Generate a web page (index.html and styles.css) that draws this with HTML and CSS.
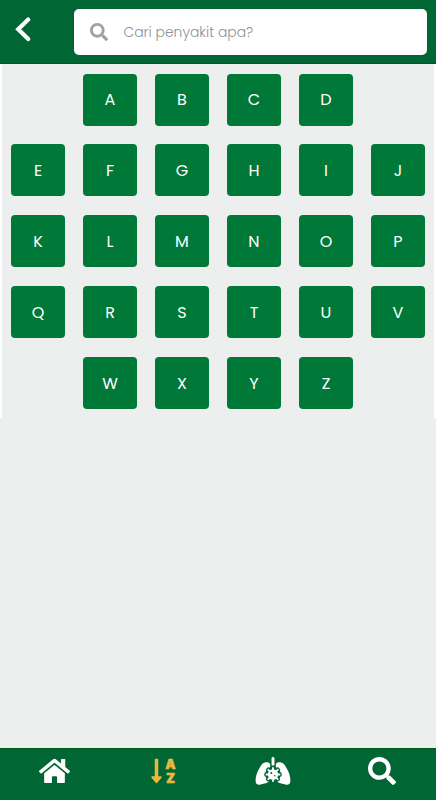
FILE: index.html
```html
<!DOCTYPE html>
<html lang="id">
<head>
<meta charset="utf-8">
<meta name="viewport" content="width=device-width, initial-scale=1">
<title>Cari penyakit</title>
<link rel="stylesheet" href="styles.css">
</head>
<body>
<header class="topbar">
  <a class="back" href="#" aria-label="Kembali">
    <svg width="16" height="26" viewBox="0 0 16 26"><path d="M13.2 2.600 3.2 12.300l10 9.700" fill="none" stroke="currentColor" stroke-width="4.200" stroke-linecap="round" stroke-linejoin="miter"/></svg>
  </a>
  <label class="search">
    <svg class="search-icon" viewBox="0 0 512 512"><path fill="currentColor" d="M505 442.700L405.300 343c-4.500-4.500-10.600-7-17-7H372c27.600-35.300 44-79.700 44-128C416 93.100 322.900 0 208 0S0 93.100 0 208s93.100 208 208 208c48.300 0 92.700-16.400 128-44v16.300c0 6.400 2.500 12.500 7 17l99.700 99.700c9.400 9.400 24.600 9.400 33.900 0l28.300-28.300c9.400-9.400 9.400-24.600.1-34zM208 336c-70.700 0-128-57.200-128-128 0-70.700 57.200-128 128-128 70.700 0 128 57.200 128 128 0 70.700-57.200 128-128 128z"/></svg>
    <span class="placeholder">Cari penyakit apa?</span>
  </label>
</header>
<main class="content">
  <div class="letters">
    <a class="letter indent">A</a><a class="letter">B</a><a class="letter">C</a><a class="letter">D</a>
    <a class="letter first">E</a><a class="letter">F</a><a class="letter">G</a><a class="letter">H</a><a class="letter">I</a><a class="letter">J</a>
    <a class="letter">K</a><a class="letter">L</a><a class="letter">M</a><a class="letter">N</a><a class="letter">O</a><a class="letter">P</a>
    <a class="letter">Q</a><a class="letter">R</a><a class="letter">S</a><a class="letter">T</a><a class="letter">U</a><a class="letter">V</a>
    <a class="letter indent">W</a><a class="letter">X</a><a class="letter">Y</a><a class="letter">Z</a>
  </div>
</main>
<nav class="tabs">
  <a class="tab"><svg class="home" viewBox="0 0 576 512"><path fill="currentColor" d="M280.370 148.260L96 300.110V464a16 16 0 0 0 16 16l112.060-.29a16 16 0 0 0 15.920-16V368a16 16 0 0 1 16-16h64a16 16 0 0 1 16 16v95.640a16 16 0 0 0 16 16.050L464 480a16 16 0 0 0 16-16V300L295.670 148.260a12.190 12.190 0 0 0-15.300 0zM571.600 251.470L488 182.560V44.050a12 12 0 0 0-12-12h-56a12 12 0 0 0-12 12v72.610L318.470 43a48 48 0 0 0-61 0L4.340 251.470a12 12 0 0 0-1.600 16.900l25.500 31A12 12 0 0 0 45.150 301l235.220-193.740a12.190 12.190 0 0 1 15.300 0L530.900 301a12 12 0 0 0 16.900-1.600l25.500-31a12 12 0 0 0-1.700-16.930z"/></svg></a>
  <a class="tab active">
    <svg class="arrow" viewBox="0 0 192 512"><path fill="currentColor" d="M176 352h-48V48a16 16 0 0 0-16-16H80a16 16 0 0 0-16 16v304H16c-14.190 0-21.360 17.240-11.290 27.310l80 96a16 16 0 0 0 22.620 0l80-96C197.350 369.260 190.220 352 176 352z"/></svg>
    <span class="az"><span>A</span><span>Z</span></span>
  </a>
  <a class="tab"><svg class="lungs" viewBox="0 0 36 30">
    <path d="M18 2.500v6" fill="none" stroke="currentColor" stroke-width="2.900" stroke-linecap="round"/>
    <path fill="currentColor" d="M11.800 6.200c2.200 0 3.400 1.200 3.400 3v12.800c0 3-1.700 4.600-4.500 5.300l-5.200 1.300C2.600 29.300.6 28 .6 25c0-4 1-7.300 2.400-10.200l3-5.300c1.500-2.400 3.400-3.300 5.800-3.300zM24.200 6.200c-2.200 0-3.400 1.200-3.400 3v12.800c0 3 1.700 4.600 4.500 5.300l5.200 1.300c2.900.7 4.900-.6 4.900-3.600 0-4-1-7.300-2.400-10.200l-3-5.300c-1.500-2.400-3.400-3.300-5.800-3.300z"/>
    <g class="virus-gap"><circle cx="18" cy="18.500" r="5.500"/><path d="M18 11.900v13.200M11.400 18.500h13.200M13.300 13.800l9.400 9.400M22.700 13.800l-9.400 9.400"/></g>
    <g class="virus"><circle cx="18" cy="18.500" r="5.200"/><path d="M18 11.900v13.200M11.400 18.500h13.200M13.300 13.800l9.400 9.400M22.700 13.800l-9.400 9.400"/></g>
    <circle class="spot" cx="16.300" cy="17" r="1"/><circle class="spot" cx="19.700" cy="19.800" r=".7"/>
  </svg></a>
  <a class="tab"><svg class="find" viewBox="0 0 512 512"><path fill="currentColor" d="M505 442.700L405.300 343c-4.500-4.500-10.600-7-17-7H372c27.600-35.300 44-79.700 44-128C416 93.100 322.900 0 208 0S0 93.100 0 208s93.100 208 208 208c48.300 0 92.700-16.400 128-44v16.300c0 6.400 2.500 12.500 7 17l99.700 99.700c9.400 9.400 24.600 9.400 33.900 0l28.300-28.300c9.400-9.400 9.400-24.600.1-34zM208 336c-70.700 0-128-57.200-128-128 0-70.700 57.200-128 128-128 70.700 0 128 57.200 128 128 0 70.700-57.200 128-128 128z"/></svg></a>
</nav>
</body>
</html>
```
FILE: styles.css
```css
* { box-sizing: border-box; }
body {
  margin: 0;
  height: 800px;
  display: flex;
  flex-direction: column;
  overflow: hidden;
  background: #edefee;
  font-family: Poppins, Inter, sans-serif;
}
svg { display: block; flex: none; }
.topbar {
  flex: none;
  height: 64px;
  padding: 9px 9px 9px 15px;
  display: flex;
  background: #006633;
  border-bottom: 1px solid #005a20;
}
.back { width: 59px; padding-top: 8px; color: #fff; }
.search {
  flex: 1;
  height: 46px;
  display: flex;
  align-items: center;
  padding-left: 16px;
  border-radius: 5px;
  background: #fff;
}
.search-icon { width: 18px; height: 18px; color: #9ca3a8; }
.placeholder {
  margin-left: 15.500px;
  font-size: 13.900px;
  font-weight: 300;
  color: #8d9398;
}
.content { flex: 1; }
.letters {
  height: 354px;
  padding-top: 9.500px;
  border: solid #fff;
  border-width: 0 2px;
  display: grid;
  grid-template-columns: repeat(6, 72px);
  grid-auto-rows: 52px;
  align-content: start;
  justify-items: center;
  row-gap: 18.900px;
}
.letter {
  width: 53.400px;
  display: flex;
  align-items: center;
  justify-content: center;
  border-radius: 4px;
  background: #007838;
  color: #fff;
  font-size: 16px;
}
.indent { grid-column-start: 2; }
.first { grid-column-start: 1; }
.tabs {
  flex: none;
  height: 52px;
  padding-bottom: 7px;
  display: grid;
  grid-template-columns: repeat(4, 1fr);
  background: #006633;
  border-top: 1px solid #005a20;
}
.tab { display: flex; align-items: center; justify-content: center; color: #fff; }
.home { width: 31px; height: 28px; }
.active { color: #e7b941; }
.arrow { width: 11px; height: 28px; }
.az {
  display: flex;
  flex-direction: column;
  align-items: center;
  width: 12px;
  margin-left: 3px;
  padding-top: 1px;
  font-family: Inter, sans-serif;
  font-size: 12.500px;
  font-weight: 900;
  line-height: 14px;
  -webkit-text-stroke: .7px currentColor;
}
.lungs { width: 36px; height: 30px; }
.virus-gap { fill: #006633; stroke: #006633; stroke-width: 4.600; stroke-linecap: round; }
.virus { fill: #fff; stroke: #fff; stroke-width: 1.900; stroke-linecap: round; }
.virus circle { stroke: none; }
.spot { fill: #006633; }
.find { width: 28px; height: 28px; }
```
